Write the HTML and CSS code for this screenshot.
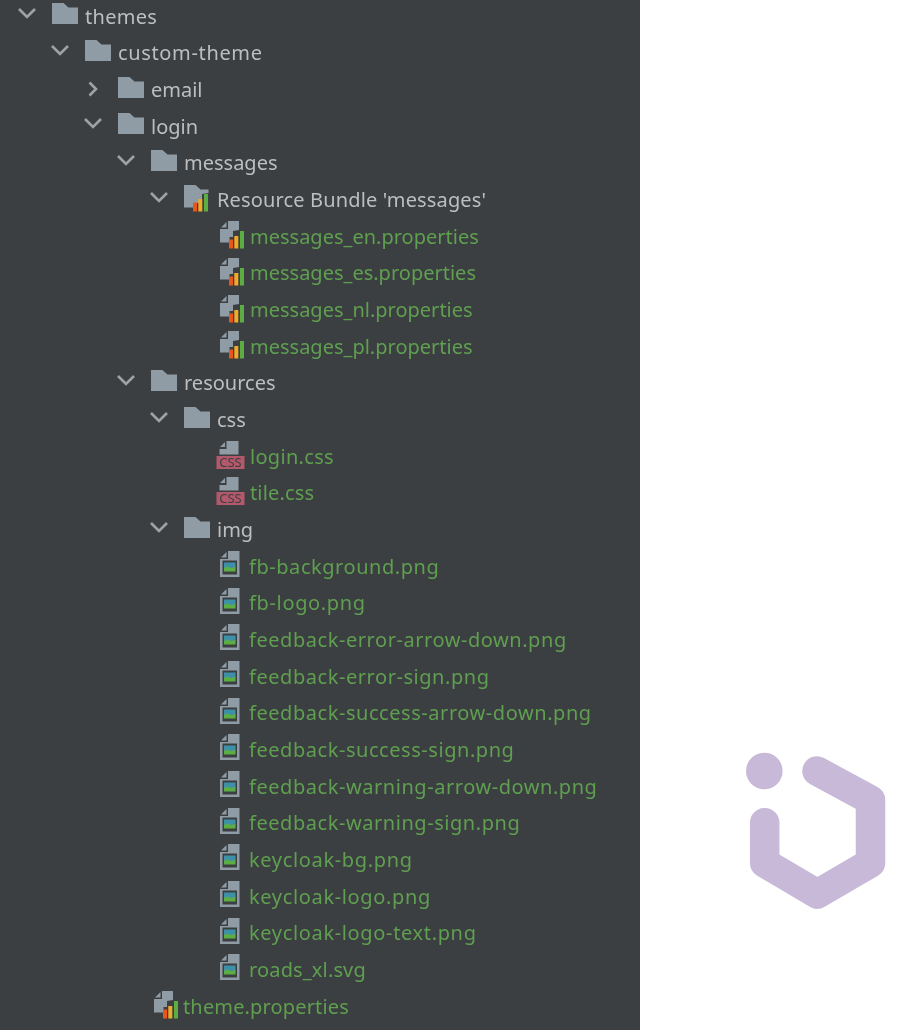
FILE: index.html
```html
<!DOCTYPE html>
<html lang="en">
<head>
<meta charset="utf-8">
<title>Project tree</title>
<link rel="stylesheet" href="styles.css">
</head>
<body>
<svg class="sprite" aria-hidden="true">
  <symbol id="i-open" viewBox="0 0 24 24"><path d="M4 8l8 8 8-8"/></symbol>
  <symbol id="i-closed" viewBox="0 0 24 24"><path d="M8.500 5.500l6.500 6.500-6.500 6.500"/></symbol>
  <symbol id="i-folder" viewBox="0 0 26 21"><path class="grey" d="M0 0h11.500l5 4.500h9.500v16.500h-26z"/></symbol>
  <symbol id="i-bundle" viewBox="0 0 30 28"><path class="grey" d="M0 1h11.500l5 4.500h8v3.500l-6.500 1v9h-5.500v4.500h-12.500z"/><use href="#bars"/></symbol>
  <symbol id="i-prop" viewBox="0 0 26 28"><path class="grey" d="M8 0h11v9l-6 1v6h-3.500v5.500h-9.500v-13.500h8z"/><path class="grey" d="M6.500 1v5.500h-5.500z"/><use href="#bars"/></symbol>
  <g id="bars">
    <rect class="red" x="9" y="18.500" width="4" height="9"/>
    <rect class="amber" x="14.300" y="15" width="4" height="12.500"/>
    <rect class="lime" x="20" y="10" width="4" height="17.500"/>
  </g>
  <symbol id="i-css" viewBox="0 0 29 29"><path class="grey" d="M10.500 0h12v13.500h-19v-5.500h7z"/><path class="grey" d="M9 1v5h-5z"/><rect class="badge" x="0.500" y="15" width="28" height="13"/><text class="badge-text" x="14.500" y="26">CSS</text></symbol>
  <symbol id="i-img" viewBox="0 0 20 26"><path class="grey" d="M8 0h11.500v26h-19.500v-18h8z"/><path class="grey" d="M6.500 1v5.500h-5.500z"/><rect class="hole" x="2.500" y="9.500" width="14.500" height="14"/><rect class="sky" x="4" y="11.500" width="11.500" height="5.500"/><path class="lime" d="M4 20.500v-3.500l3-1.500 4 1.500 4.500-1v4.500z"/></symbol>
</svg>
<main class="screen">
  <div class="tree">
    <div class="row d0"><svg class="chev"><use href="#i-open"/></svg><svg class="ico folder"><use href="#i-folder"/></svg><span class="label sp-s">themes</span></div>
    <div class="row d1"><svg class="chev"><use href="#i-open"/></svg><svg class="ico folder"><use href="#i-folder"/></svg><span class="label sp-l">custom-theme</span></div>
    <div class="row d2"><svg class="chev closed"><use href="#i-closed"/></svg><svg class="ico folder"><use href="#i-folder"/></svg><span class="label">email</span></div>
    <div class="row d2"><svg class="chev"><use href="#i-open"/></svg><svg class="ico folder"><use href="#i-folder"/></svg><span class="label">login</span></div>
    <div class="row d3"><svg class="chev"><use href="#i-open"/></svg><svg class="ico folder"><use href="#i-folder"/></svg><span class="label">messages</span></div>
    <div class="row d4"><svg class="chev"><use href="#i-open"/></svg><svg class="ico bundle"><use href="#i-bundle"/></svg><span class="label sp-xs">Resource Bundle 'messages'</span></div>
    <div class="row d5"><svg class="ico prop"><use href="#i-prop"/></svg><span class="label new">messages_en.properties</span></div>
    <div class="row d5"><svg class="ico prop"><use href="#i-prop"/></svg><span class="label new">messages_es.properties</span></div>
    <div class="row d5"><svg class="ico prop"><use href="#i-prop"/></svg><span class="label new">messages_nl.properties</span></div>
    <div class="row d5"><svg class="ico prop"><use href="#i-prop"/></svg><span class="label new">messages_pl.properties</span></div>
    <div class="row d3"><svg class="chev"><use href="#i-open"/></svg><svg class="ico folder"><use href="#i-folder"/></svg><span class="label">resources</span></div>
    <div class="row d4"><svg class="chev"><use href="#i-open"/></svg><svg class="ico folder"><use href="#i-folder"/></svg><span class="label">css</span></div>
    <div class="row d5"><svg class="ico css"><use href="#i-css"/></svg><span class="label new sp-s">login.css</span></div>
    <div class="row d5"><svg class="ico css"><use href="#i-css"/></svg><span class="label new sp-xs">tile.css</span></div>
    <div class="row d4"><svg class="chev"><use href="#i-open"/></svg><svg class="ico folder"><use href="#i-folder"/></svg><span class="label">img</span></div>
    <div class="row d5"><svg class="ico img"><use href="#i-img"/></svg><span class="label new sp-m">fb-background.png</span></div>
    <div class="row d5"><svg class="ico img"><use href="#i-img"/></svg><span class="label new sp-l">fb-logo.png</span></div>
    <div class="row d5"><svg class="ico img"><use href="#i-img"/></svg><span class="label new sp-m">feedback-error-arrow-down.png</span></div>
    <div class="row d5"><svg class="ico img"><use href="#i-img"/></svg><span class="label new sp-m">feedback-error-sign.png</span></div>
    <div class="row d5"><svg class="ico img"><use href="#i-img"/></svg><span class="label new sp-m">feedback-success-arrow-down.png</span></div>
    <div class="row d5"><svg class="ico img"><use href="#i-img"/></svg><span class="label new sp-m">feedback-success-sign.png</span></div>
    <div class="row d5"><svg class="ico img"><use href="#i-img"/></svg><span class="label new sp-m">feedback-warning-arrow-down.png</span></div>
    <div class="row d5"><svg class="ico img"><use href="#i-img"/></svg><span class="label new sp-m">feedback-warning-sign.png</span></div>
    <div class="row d5"><svg class="ico img"><use href="#i-img"/></svg><span class="label new sp-l">keycloak-bg.png</span></div>
    <div class="row d5"><svg class="ico img"><use href="#i-img"/></svg><span class="label new sp-l">keycloak-logo.png</span></div>
    <div class="row d5"><svg class="ico img"><use href="#i-img"/></svg><span class="label new sp-l">keycloak-logo-text.png</span></div>
    <div class="row d5"><svg class="ico img"><use href="#i-img"/></svg><span class="label new sp-xs">roads_xl.svg</span></div>
    <div class="row d3 root-file"><svg class="ico prop"><use href="#i-prop"/></svg><span class="label new sp-xs">theme.properties</span></div>
  </div>
  <aside class="side">
    <svg class="logo" viewBox="0 0 140 156" aria-label="Logo">
      <circle class="logo-dot" cx="18.300" cy="18" r="18.300"/>
      <path class="logo-line" d="M18.700 69.700V110L71.300 141 124.500 110V47L71 18"/>
    </svg>
  </aside>
</main>
</body>
</html>
```

FILE: styles.css
```css
* { box-sizing: border-box; }
html, body { margin: 0; height: 100%; overflow: hidden; background: #fff; }
.sprite { display: none; }
.screen { display: flex; height: 1030px; }
.tree {
  width: 640px;
  flex: none;
  background: #3c3f41;
  overflow: hidden;
  font-family: "Noto Sans", sans-serif;
  font-size: 20px;
}
.tree::before { content: ""; display: block; height: 0; margin-top: -2px; }
.row { display: flex; align-items: center; height: 36.67px; filter: blur(0.6px); }
.row.d0 { padding-left: 15px; }
.row.d1 { padding-left: 48px; }
.row.d2 { padding-left: 81px; }
.row.d3 { padding-left: 114px; }
.row.d4 { padding-left: 147px; }
.row.d5 { padding-left: 216px; }
.row.root-file { padding-left: 150px; }
.chev { width: 24px; height: 24px; flex: none; margin: 0 13px 6px 0; fill: none; stroke: #a0a3a5; stroke-width: 2.6; }
.chev.closed { margin-bottom: 2px; }
.ico { flex: none; }
.folder { width: 26px; height: 21px; margin: 0 7px 5px 0; }
.bundle { width: 30px; height: 28px; margin: 0 3px 4px 0; }
.prop { width: 26px; height: 28px; margin: 0 4px 2px 4px; }
.root-file .prop { margin-right: 3px; }
.css { width: 29px; height: 29px; margin: 0 5px 2px 0; }
.img { width: 20px; height: 26px; margin: 0 9px 4px 4px; }
.grey { fill: #8f9ca6; }
.hole { fill: #3c3f41; }
.red { fill: #e8561c; }
.amber { fill: #f0aa2a; }
.lime { fill: #5cae44; }
.sky { fill: #3e8fa8; }
.badge { fill: #b4596c; }
.badge-text { fill: #3c3f41; font-size: 13px; text-anchor: middle; font-family: "Noto Sans", sans-serif; }
.label { color: #bcbfc1; white-space: nowrap; }
.label.new { color: #5f9f50; }
.sp-xs { letter-spacing: 0.15px; }
.sp-s { letter-spacing: 0.3px; }
.sp-m { letter-spacing: 0.55px; }
.sp-l { letter-spacing: 0.65px; }
.side { flex: 1; padding: 753px 0 0 106px; }
.logo { display: block; width: 140px; height: 156px; overflow: visible; }
.logo-dot { fill: #c9b9d8; }
.logo-line { fill: none; stroke: #c9b9d8; stroke-width: 29.500; stroke-linecap: round; stroke-linejoin: round; }
```
